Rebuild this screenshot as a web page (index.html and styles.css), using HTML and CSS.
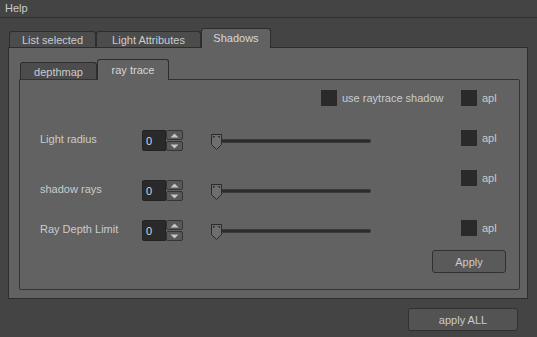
FILE: index.html
```html
<!DOCTYPE html>
<html lang="en">
<head>
  <meta charset="UTF-8" />
  <title>Shadows</title>
  <link rel="stylesheet" href="styles.css">
</head>
<body>
  <div class="menubar"><span class="menu-item">Help</span></div>

  <div class="main">
    <div class="tabs">
      <div class="tab tab-list">List selected</div>
      <div class="tab tab-light">Light Attributes</div>
      <div class="tab tab-shadows active">Shadows</div>
    </div>

    <div class="frame">
      <div class="tabs inner-tabs">
        <div class="tab tab-depth">depthmap</div>
        <div class="tab tab-ray active">ray trace</div>
      </div>

      <div class="panel">
        <div class="row row-top">
          <div class="opt">
            <span class="check"></span>
            <span>use raytrace shadow</span>
          </div>
          <div class="apl"><span class="check"></span><span>apl</span></div>
        </div>

        <div class="row row-param row-1">
          <div class="label">Light radius</div>
          <div class="spin">
            <div class="spin-value">0</div>
            <div class="spin-btns">
              <div class="spin-btn"><svg width="9" height="5" viewBox="0 0 9 5"><path d="M0.5 4.5 L4.5 0.5 L8.5 4.5 Z" fill="#c6c6c6"/></svg></div>
              <div class="spin-btn"><svg width="9" height="5" viewBox="0 0 9 5"><path d="M0.5 0.5 L4.5 4.5 L8.5 0.5 Z" fill="#c6c6c6"/></svg></div>
            </div>
          </div>
          <div class="slider">
            <svg class="handle" width="11" height="16" viewBox="0 0 11 16">
              <path d="M0.5 0.5 H10.5 V10.5 L5.5 15.5 L0.5 10.5 Z" fill="#6e6e6e" stroke="#2a2a2a"/>
              <path d="M2.5 4 V2.5 H4 M7 2.5 H8.5 V4" fill="none" stroke="#2e2e2e"/>
            </svg>
            <div class="track"></div>
          </div>
          <div class="apl"><span class="check"></span><span>apl</span></div>
        </div>

        <div class="row row-param row-2">
          <div class="label">shadow rays</div>
          <div class="spin">
            <div class="spin-value">0</div>
            <div class="spin-btns">
              <div class="spin-btn"><svg width="9" height="5" viewBox="0 0 9 5"><path d="M0.5 4.5 L4.5 0.5 L8.5 4.5 Z" fill="#c6c6c6"/></svg></div>
              <div class="spin-btn"><svg width="9" height="5" viewBox="0 0 9 5"><path d="M0.5 0.5 L4.5 4.5 L8.5 0.5 Z" fill="#c6c6c6"/></svg></div>
            </div>
          </div>
          <div class="slider">
            <svg class="handle" width="11" height="16" viewBox="0 0 11 16">
              <path d="M0.5 0.5 H10.5 V10.5 L5.5 15.5 L0.5 10.5 Z" fill="#6e6e6e" stroke="#2a2a2a"/>
              <path d="M2.5 4 V2.5 H4 M7 2.5 H8.5 V4" fill="none" stroke="#2e2e2e"/>
            </svg>
            <div class="track"></div>
          </div>
          <div class="apl apl-raised"><span class="check"></span><span>apl</span></div>
        </div>

        <div class="row row-param row-3">
          <div class="label">Ray Depth Limit</div>
          <div class="spin">
            <div class="spin-value">0</div>
            <div class="spin-btns">
              <div class="spin-btn"><svg width="9" height="5" viewBox="0 0 9 5"><path d="M0.5 4.5 L4.5 0.5 L8.5 4.5 Z" fill="#c6c6c6"/></svg></div>
              <div class="spin-btn"><svg width="9" height="5" viewBox="0 0 9 5"><path d="M0.5 0.5 L4.5 4.5 L8.5 0.5 Z" fill="#c6c6c6"/></svg></div>
            </div>
          </div>
          <div class="slider">
            <svg class="handle" width="11" height="16" viewBox="0 0 11 16">
              <path d="M0.5 0.5 H10.5 V10.5 L5.5 15.5 L0.5 10.5 Z" fill="#6e6e6e" stroke="#2a2a2a"/>
              <path d="M2.5 4 V2.5 H4 M7 2.5 H8.5 V4" fill="none" stroke="#2e2e2e"/>
            </svg>
            <div class="track"></div>
          </div>
          <div class="apl"><span class="check"></span><span>apl</span></div>
        </div>

        <div class="row row-apply">
          <button type="button" class="btn btn-apply">Apply</button>
        </div>
      </div>
    </div>

    <div class="footer">
      <button type="button" class="btn btn-all">apply ALL</button>
    </div>
  </div>
</body>
</html>
```

FILE: styles.css
```css
:root {
  --fundo: #444444;
  --painel: #626262;
  --aba: #4c4c4c;
  --borda: #2d2d2d;
  --texto: #cbcbcb;
  --campo: #2a2a2a;
}

body {
  margin: 0;
  background-color: var(--fundo);
  color: var(--texto);
  font-family: 'Liberation Sans', Arial, sans-serif;
  font-size: 11px;
  line-height: 13px;
}

.menubar {
  height: 17px;
  border-bottom: 1px solid #2f2f2f;
  padding-left: 5px;
}

.menu-item {
  display: inline-block;
  padding-top: 2px;
}

.main {
  padding: 10px 9px 0 8px;
}

/* abas */
.tabs {
  display: flex;
  align-items: flex-end;
  padding-left: 1px;
}

.tab {
  box-sizing: border-box;
  height: 16px;
  border: 1px solid var(--borda);
  border-bottom: none;
  border-radius: 3px 3px 0 0;
  background-color: var(--aba);
  text-align: center;
  padding-top: 2px;
}

.tab.active {
  position: relative;
  height: 20px;
  margin-bottom: -1px;
  background-color: var(--painel);
  color: #d6d6d6;
  padding-top: 3px;
}

.tab-list { width: 87px; }
.tab-light { width: 105px; }
.tab-shadows { width: 70px; }

.inner-tabs .tab {
  height: 17px;
  padding-top: 3px;
}

.inner-tabs .tab.active {
  height: 21px;
  padding-top: 4px;
}

.tab-depth { width: 77px; }
.tab-ray { width: 72px; }

.frame {
  box-sizing: border-box;
  height: 252px;
  border: 1px solid var(--borda);
  background-color: var(--painel);
  padding: 11px 7px 8px 10px;
}

.panel {
  box-sizing: border-box;
  height: 211px;
  border: 1px solid #333;
  border-radius: 0 2px 2px 2px;
  background-color: var(--painel);
  padding: 10px 18px 0 0;
}

/* linhas */
.row {
  display: flex;
  align-items: flex-start;
}

.row-top {
  justify-content: flex-end;
}

.opt {
  display: flex;
  align-items: center;
  gap: 5px;
  width: 140px;
}

.check {
  display: inline-block;
  width: 16px;
  height: 16px;
  background-color: var(--campo);
}

.apl {
  display: flex;
  align-items: center;
  gap: 5px;
  width: 40px;
}

.apl-raised {
  margin-top: -10px;
}

.row-1 { margin-top: 24px; }
.row-2 { margin-top: 29px; }
.row-3 { margin-top: 19px; }

.label {
  width: 102px;
  padding-left: 20px;
  padding-top: 3px;
}

.spin {
  display: flex;
  width: 41px;
  height: 21px;
}

.spin-value {
  box-sizing: border-box;
  width: 24px;
  height: 21px;
  background-color: var(--campo);
  border: 1px solid #232323;
  border-radius: 2px 0 0 2px;
  padding: 4px 0 0 3px;
  color: #d0dae2;
}

.spin-btns {
  display: flex;
  flex-direction: column;
  gap: 1px;
  width: 17px;
}

.spin-btn {
  box-sizing: border-box;
  height: 10px;
  border: 1px solid #353535;
  border-radius: 2px;
  background-color: #585858;
  display: flex;
  align-items: center;
  justify-content: center;
}

.spin-btn svg {
  display: block;
}

.slider {
  display: flex;
  align-items: center;
  width: 160px;
  height: 21px;
  margin-left: 28px;
  margin-right: 90px;
}

.handle {
  display: block;
  flex-shrink: 0;
  margin-top: 2px;
}

.track {
  flex: 1;
  height: 2px;
  background-color: #2c2c2c;
  border: 1px solid #3a3a3a;
  border-left: none;
  border-radius: 0 2px 2px 0;
}

.row-apply {
  justify-content: flex-end;
  margin-top: 9px;
  margin-right: -5px;
}

/* botões */
.btn {
  box-sizing: border-box;
  font-family: 'Liberation Sans', Arial, sans-serif;
  font-size: 11px;
  color: var(--texto);
  background-color: #5a5a5a;
  border: 1px solid #303030;
  border-radius: 3px;
  padding: 0;
}

.btn-apply {
  width: 74px;
  height: 23px;
}

.footer {
  display: flex;
  justify-content: flex-end;
  padding: 9px 10px 0 0;
}

.btn-all {
  width: 110px;
  height: 23px;
  background-color: #535353;
}
```
